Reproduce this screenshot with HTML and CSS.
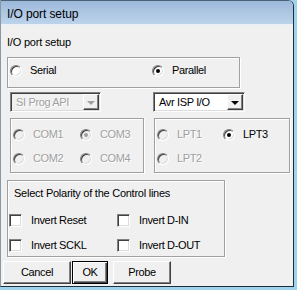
FILE: index.html
```html
<!DOCTYPE html>
<html>
<head>
<meta charset="utf-8">
<link rel="stylesheet" href="styles.css">
</head>
<body>
<div class="window">
  <div class="frame">
    <div class="titlebar">I/O port setup</div>
    <div class="client">
      <div class="caption">I/O port setup</div>
      <div class="group g-mode">
        <div class="radio"><span class="rb"></span><span>Serial</span></div>
        <div class="radio"><span class="rb on"></span><span>Parallel</span></div>
      </div>
      <div class="combos">
        <div class="combo c-api disabled"><span class="ctext">SI Prog API</span><span class="cbtn"><i></i></span></div>
        <div class="combo c-isp"><span class="ctext">Avr ISP I/O</span><span class="cbtn"><i></i></span></div>
      </div>
      <div class="ports">
        <div class="group g-com disabled">
          <div class="radio"><span class="rb"></span><span>COM1</span></div>
          <div class="radio"><span class="rb on"></span><span>COM3</span></div>
          <div class="radio"><span class="rb"></span><span>COM2</span></div>
          <div class="radio"><span class="rb"></span><span>COM4</span></div>
        </div>
        <div class="group g-lpt">
          <div class="radio disabled"><span class="rb"></span><span>LPT1</span></div>
          <div class="radio"><span class="rb on"></span><span>LPT3</span></div>
          <div class="radio disabled"><span class="rb"></span><span>LPT2</span></div>
        </div>
      </div>
      <div class="group g-pol">
        <div class="pol-title">Select Polarity of the Control lines</div>
        <div class="checks">
          <div class="check"><span class="cb"></span><span>Invert Reset</span></div>
          <div class="check"><span class="cb"></span><span>Invert D-IN</span></div>
          <div class="check"><span class="cb"></span><span>Invert SCKL</span></div>
          <div class="check"><span class="cb"></span><span>Invert D-OUT</span></div>
        </div>
      </div>
      <div class="buttons">
        <div class="btn b-cancel">Cancel</div>
        <div class="btn b-ok">OK</div>
        <div class="btn b-probe">Probe</div>
      </div>
    </div>
  </div>
</div>
</body>
</html>
```

FILE: styles.css
```css
html, body {
  margin: 0;
  padding: 0;
  background: #9fd2ec;
}
body {
  font-family: "Liberation Sans", Arial, sans-serif;
  font-size: 11px;
  line-height: 13px;
  letter-spacing: -0.35px;
  color: #000;
}
.window {
  width: 297px;
  height: 290px;
  background: #9fd2ec;
  overflow: hidden;
}
.frame {
  width: 294px;
  height: 287px;
  box-sizing: border-box;
  border-left: 1px solid #8a98a6;
  border-right: 1px solid #1c2d3d;
  border-bottom: 1px solid #1c2d3d;
  border-top: 1px solid #4d6275;
  border-top-right-radius: 6px;
  background: #f0f0f0;
  display: flex;
  flex-direction: column;
  overflow: hidden;
}
.titlebar {
  height: 24px;
  box-sizing: border-box;
  padding: 6px 0 0 6px;
  font-size: 12px;
  line-height: 14px;
  letter-spacing: -0.1px;
  background: linear-gradient(#9db9da, #bcd3eb);
  border-bottom: 1px solid #e9eff6;
}
.client {
  flex: 1;
  display: flex;
  flex-direction: column;
  align-items: flex-start;
}
.caption {
  margin: 11px 0 0 6px;
  letter-spacing: -0.2px;
}
.group {
  box-sizing: border-box;
  border: 1px solid #a0a0a0;
  box-shadow: 1px 1px 0 #fff, inset 1px 1px 0 #fff;
}
.g-mode {
  margin: 8px 0 0 6px;
  width: 233px;
  height: 31px;
  padding: 6px 0 0 2px;
  display: grid;
  grid-template-columns: 142px auto;
}
.radio, .check {
  display: flex;
  align-items: center;
  height: 13px;
}
.rb {
  width: 12px;
  height: 12px;
  box-sizing: border-box;
  border-radius: 50%;
  border: 1px solid;
  border-color: #808080 #ffffff #ffffff #808080;
  box-shadow: inset 1px 1px 0 #404040, inset -1px -1px 0 #dcdcdc;
  background: #fff;
  margin-right: 8px;
  display: flex;
  align-items: center;
  justify-content: center;
  flex: none;
}
.rb.on::after {
  content: "";
  width: 4px;
  height: 4px;
  border-radius: 50%;
  background: #000;
}
.disabled .rb {
  background: #f0f0f0;
}
.disabled .rb.on::after {
  background: #a0a0a0;
}
.disabled {
  color: #a0a0a0;
  text-shadow: 1px 1px 0 #fff;
}
.combos {
  margin: 4px 0 0 9px;
  display: flex;
  gap: 52px;
}
.combo {
  box-sizing: border-box;
  height: 20px;
  border: 1px solid;
  border-color: #808080 #ffffff #ffffff #808080;
  box-shadow: inset 1px 1px 0 #404040, inset -1px -1px 0 #dcdcdc;
  background: #fff;
  display: flex;
  align-items: center;
  padding: 1px;
}
.combo.disabled {
  background: #f0f0f0;
}
.c-api { width: 91px; }
.c-isp { width: 92px; }
.ctext {
  flex: 1;
  padding-left: 4px;
  white-space: nowrap;
}
.cbtn {
  width: 16px;
  height: 16px;
  box-sizing: border-box;
  border: 1px solid;
  border-color: #ffffff #404040 #404040 #ffffff;
  box-shadow: inset -1px -1px 0 #808080;
  background: #f0f0f0;
  display: flex;
  align-items: center;
  justify-content: center;
  flex: none;
}
.cbtn i {
  width: 0;
  height: 0;
  border-left: 4px solid transparent;
  border-right: 4px solid transparent;
  border-top: 4px solid #000;
  margin: 1px 1px 0 0;
}
.combo.disabled .cbtn i {
  border-top-color: #a0a0a0;
}
.ports {
  margin: 6px 0 0 9px;
  display: flex;
  gap: 10px;
}
.g-com, .g-lpt {
  height: 55px;
  display: grid;
  row-gap: 11px;
  align-content: start;
  padding: 9px 0 0 2px;
}
.g-com {
  width: 134px;
  grid-template-columns: 67px auto;
}
.g-lpt {
  width: 136px;
  grid-template-columns: 66px auto;
}
.g-pol {
  margin: 7px 0 0 6px;
  width: 218px;
  height: 77px;
  padding: 6px 0 0 1px;
}
.pol-title {
  margin-left: 5px;
  letter-spacing: -0.25px;
}
.checks {
  margin-top: 14px;
  display: grid;
  grid-template-columns: 108px auto;
  row-gap: 12px;
}
.cb {
  width: 13px;
  height: 13px;
  box-sizing: border-box;
  border: 1px solid;
  border-color: #808080 #ffffff #ffffff #808080;
  box-shadow: inset 1px 1px 0 #404040, inset -1px -1px 0 #dcdcdc;
  background: #fff;
  margin-right: 9px;
  flex: none;
}
.buttons {
  margin: 4px 0 0 2px;
  display: flex;
}
.btn {
  box-sizing: border-box;
  height: 23px;
  display: flex;
  align-items: center;
  justify-content: center;
  border: 1px solid;
  border-color: #ffffff #404040 #404040 #ffffff;
  box-shadow: inset -1px -1px 0 #808080;
  background: #f0f0f0;
}
.b-cancel { width: 68px; }
.b-ok {
  width: 36px;
  margin-left: 1px;
  border: 1px solid #000;
  box-shadow: inset 1px 1px 0 #fff, inset -1px -1px 0 #404040, inset -2px -2px 0 #808080;
}
.b-probe { width: 58px; margin-left: 5px; }
```
